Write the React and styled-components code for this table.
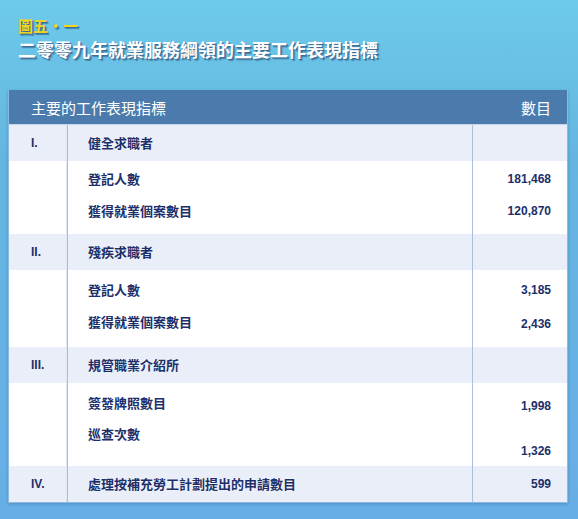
import React from 'react'
import styled, { createGlobalStyle } from 'styled-components';

const sections = [
  {
    no: 'I.',
    title: '健全求職者',
    items: [
      { label: '登記人數', value: '181,468', h: 34, lt: 10, vt: 10 },
      { label: '獲得就業個案數目', value: '120,870', h: 39, lt: 8, vt: 8 },
    ],
  },
  {
    no: 'II.',
    title: '殘疾求職者',
    items: [
      { label: '登記人數', value: '3,185', h: 36, lt: 12, vt: 12 },
      { label: '獲得就業個案數目', value: '2,436', h: 41, lt: 8, vt: 10 },
    ],
  },
  {
    no: 'III.',
    title: '規管職業介紹所',
    items: [
      { label: '簽發牌照數目', value: '1,998', h: 36, lt: 12, vt: 15 },
      { label: '巡查次數', value: '1,326', h: 47, lt: 7, vt: 24 },
    ],
  },
  {
    no: 'IV.',
    title: '處理按補充勞工計劃提出的申請數目',
    value: '599',
    items: [],
  },
];

function App() {
  return (
    <Page>
      <GlobalStyle />
      <Heading>
        <FigNo>圖五・一</FigNo>
        <Title>二零零九年就業服務綱領的主要工作表現指標</Title>
      </Heading>
      <Table>
        <HeadRow>
          <HeadCell>主要的工作表現指標</HeadCell>
          <HeadCell $right>數目</HeadCell>
        </HeadRow>
        {sections.map((s) => (
          <React.Fragment key={s.no}>
            <SectionRow>
              <NoCell>{s.no}</NoCell>
              <LabelCell>{s.title}</LabelCell>
              <ValueCell>{s.value}</ValueCell>
            </SectionRow>
            {s.items.map((it) => (
              <ItemRow key={it.label} $h={it.h}>
                <NoCell />
                <LabelCell $pt={it.lt}>{it.label}</LabelCell>
                <ValueCell $pt={it.vt}>{it.value}</ValueCell>
              </ItemRow>
            ))}
          </React.Fragment>
        ))}
      </Table>
    </Page>
  )
}

export default App

const GlobalStyle = createGlobalStyle`
  body {
    margin: 0;
    font-family: "Noto Sans CJK TC", "Liberation Sans", sans-serif;
  }
`;

const Page = styled.div`
  width: 578px;
  height: 519px;
  background: linear-gradient(180deg, #6dcaea 0%, #64b6e0 30%, #68aee6 100%);
  overflow: hidden;
  padding-top: 16px;
  box-sizing: border-box;
`;

const Heading = styled.div`
  padding-left: 18px;
  display: flex;
  flex-direction: column;
  gap: 1px;
`;

const FigNo = styled.div`
  font-size: 15px;
  line-height: 20px;
  font-weight: 700;
  color: #f3d41c;
  text-shadow: 1px 1px 0 #3b6f9c, 2px 2px 1px rgba(30, 70, 110, 0.5);
`;

const Title = styled.div`
  font-size: 18px;
  line-height: 24px;
  font-weight: 700;
  color: #ffffff;
  text-shadow: 1px 1px 0 #3f6e98, 2px 2px 1px rgba(30, 70, 110, 0.5);
`;

const Table = styled.div`
  margin: 29px 0 0 8px;
  width: 560px;
  background: #ffffff;
  border: 1px solid #8ab9e2;
  border-top: none;
  box-sizing: border-box;
  box-shadow: 0 1px 3px rgba(40, 80, 130, 0.35);
`;

const HeadRow = styled.div`
  display: flex;
  justify-content: space-between;
  align-items: center;
  height: 34px;
  padding: 0 16px 0 22px;
  background: #4b7bac;
  border-bottom: 1px solid #c9d7ea;
`;

const HeadCell = styled.div`
  font-size: 15px;
  color: #ffffff;
  text-align: ${({ $right }) => ($right ? 'right' : 'left')};
`;

const SectionRow = styled.div`
  display: grid;
  grid-template-columns: 58px 405px 1fr;
  height: 36px;
  align-items: stretch;
  background: #e9eef8;
  > * {
    display: flex;
    align-items: center;
  }
`;

const ItemRow = styled.div`
  display: grid;
  grid-template-columns: 58px 405px 1fr;
  height: ${({ $h }) => $h}px;
  background: #ffffff;
`;

const NoCell = styled.div`
  padding-left: 22px;
  font-family: "Liberation Sans", Arial, sans-serif;
  font-size: 12px;
  font-weight: 700;
  color: #1c2f6a;
  border-right: 1px solid #dfe7f3;
`;

const LabelCell = styled.div`
  padding: ${({ $pt }) => $pt || 0}px 0 0 20px;
  font-size: 13px;
  line-height: 16px;
  font-weight: 700;
  color: #1c2f6a;
  border-left: 1px solid #a9c0dc;
  text-shadow: 0 0 2px #ffffff;
`;

const ValueCell = styled.div`
  padding: ${({ $pt }) => $pt || 0}px 16px 0 0;
  justify-content: flex-end;
  text-align: right;
  font-family: "Liberation Sans", Arial, sans-serif;
  font-size: 12px;
  line-height: 16px;
  font-weight: 700;
  color: #1c2f6a;
  border-left: 1px solid #a9c0dc;
`;
